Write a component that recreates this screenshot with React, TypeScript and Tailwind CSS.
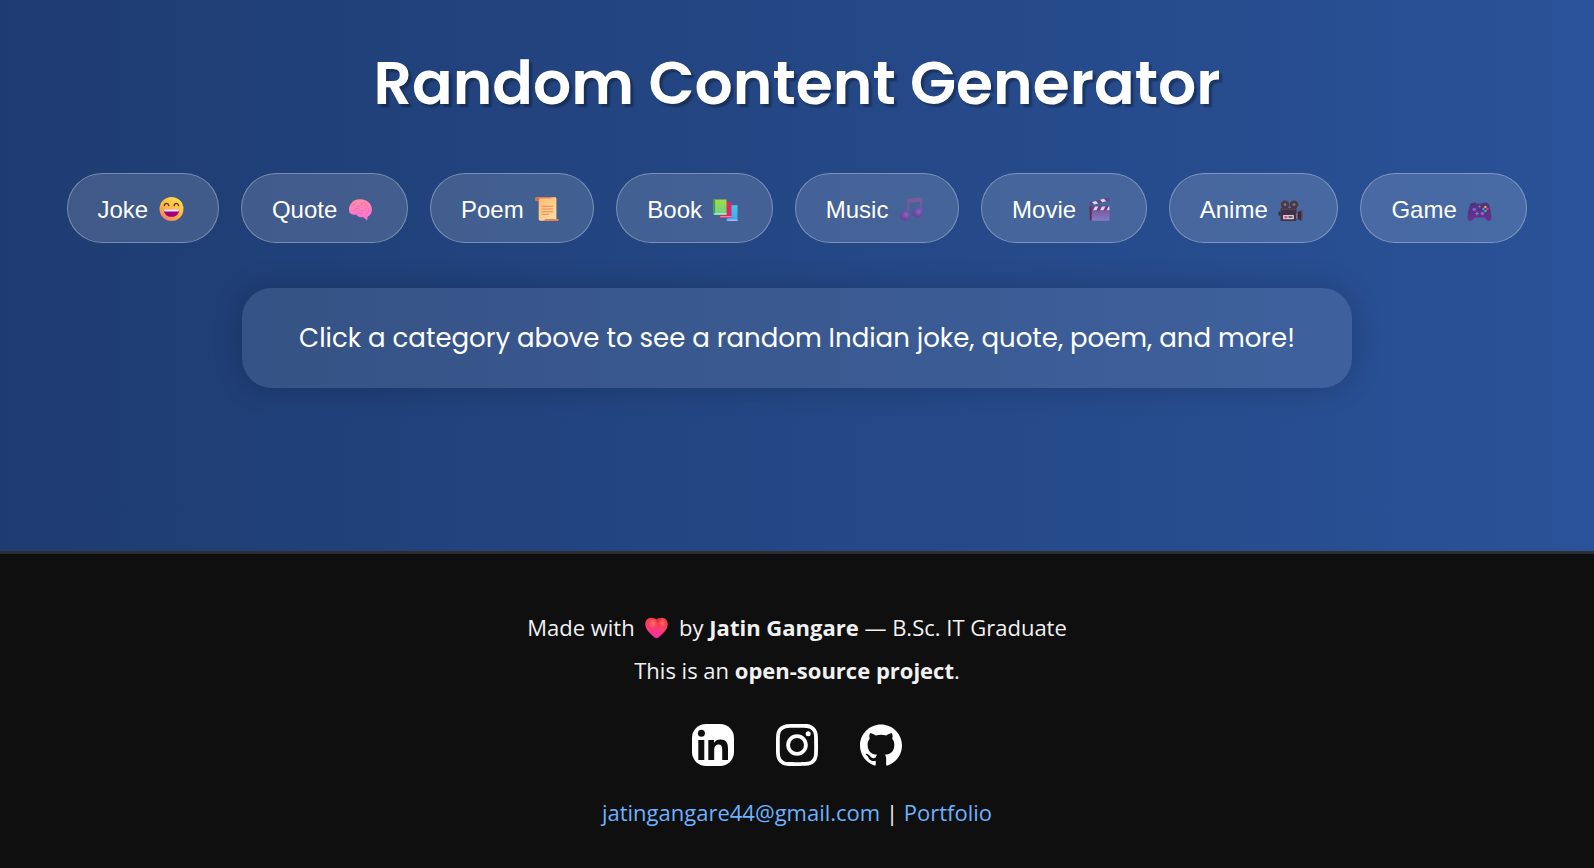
import type { ReactNode } from "react";
import { SiGithub, SiInstagram } from "react-icons/si";

function Glyph({ children }: { children: ReactNode }) {
  return (
    <svg aria-hidden="true" viewBox="0 0 32 24" className="inline-block h-6 w-[33px] align-[-3px]">
      {children}
    </svg>
  );
}

const Laugh = () => (
  <Glyph>
    <defs>
      <linearGradient id="face" x1="0.8" y1="0" x2="0.2" y2="1">
        <stop offset="0" stopColor="#ffe04a" />
        <stop offset="0.6" stopColor="#ffb33a" />
        <stop offset="1" stopColor="#f4786a" />
      </linearGradient>
    </defs>
    <circle cx="16" cy="12" r="12" fill="url(#face)" />
    <path d="M8.8 8.6c.5-3 4-3 4.6 0M18.6 8.6c.5-3 4-3 4.6 0" fill="none" stroke="#5a3030" strokeWidth="1.3" strokeLinecap="round" />
    <path d="M8.3 12.4h15.4c0 4.6-3.3 7.4-7.7 7.4s-7.7-2.8-7.7-7.4z" fill="#a3007f" />
    <path d="M8.6 12.2h14.8v1.2c0 .8-.6 1.2-1.2 1.2H9.8c-.7 0-1.2-.4-1.2-1.2z" fill="#f3e6f5" />
  </Glyph>
);

const Brain = () => (
  <Glyph>
    <defs>
      <linearGradient id="brain" x1="0" y1="0" x2="0" y2="1">
        <stop offset="0" stopColor="#ff8fa3" />
        <stop offset="1" stopColor="#ff6ee0" />
      </linearGradient>
    </defs>
    <path d="M5 15.6c-1-3-.6-6.800 1.600-9C8.500 3.300 12.500 1.900 16.500 2.300c5.500.2 9.500 3.500 10.600 8 .9 4-.6 8-4 9.500l-.5 3.800-4-3.600c-3 .6-5.500-.2-6.800-2.600-2.600.6-5.200.3-6.800-1.800z" fill="url(#brain)" />
    <path d="M7.500 8c2-.2 3.300-1.200 4-2.600M13 9.500c2.500 0 4.500-1.500 5-4M20 4.800c-.3 2.200 1 3.600 3.200 4M9 13.500c1.300-2 3-2.500 5.500-1.800M16.500 13.500c2.500 1 5-.2 5.700-2.600M24 12c.6 2.300-.5 4-2.600 4.800M12.500 16.500c2.500-.8 4.500-.5 6 1" fill="none" stroke="#e268a6" strokeWidth="0.7" strokeLinecap="round" />
  </Glyph>
);

const Scroll = () => (
  <Glyph>
    <defs>
      <linearGradient id="paper" x1="0" y1="0" x2="1" y2="1">
        <stop offset="0" stopColor="#ffb56b" />
        <stop offset="1" stopColor="#ffe0a8" />
      </linearGradient>
    </defs>
    <path d="M6.500 0.300h18c.9 0 1.400.6 1.400 1.400v22H9.800c-1 0-1.600-.7-1.600-1.600V3.500H5.300c-1.200 0-1.200-3.200 1.200-3.200z" fill="url(#paper)" />
    <path d="M6.500.3H21v.9H8.800v2.400H5.600C4 3.600 4.200.3 6.500.3z" fill="#d6713f" />
    <path d="M15 21.900h13c.4 1.300-.3 2.100-1.800 2.100H10.500c2 0 3.800-.5 4.500-2.100z" fill="#e88352" />
    <path d="M11 9.200h11.600M11 12h11.600M11 14.800h11.600M11 17.300h7.500" stroke="#e58a55" strokeWidth="1.1" />
  </Glyph>
);

const Books = () => (
  <Glyph>
    <defs>
      <linearGradient id="green" x1="0" y1="0" x2="0" y2="1">
        <stop offset="0" stopColor="#a6db45" />
        <stop offset="1" stopColor="#63d58b" />
      </linearGradient>
      <linearGradient id="blue" x1="0" y1="0" x2="0" y2="1">
        <stop offset="0" stopColor="#48c9f2" />
        <stop offset="1" stopColor="#3aa4f0" />
      </linearGradient>
    </defs>
    <path d="M17 8.200h11V24H18c-1.500 0-1.500-2.500 0-2.500z" fill="url(#blue)" />
    <path d="M17.500 22.500H28V24H18z" fill="#a9b9f0" />
    <path d="M10 5h12v16H11c-1.600 0-1.600-2.300 0-2.300z" fill="#dc2864" />
    <path d="M10.500 19.300H22v.9H11z" fill="#e6a3cf" />
    <path d="M4 2.500h13v15.400H5c-.6 0-1-.4-1-1z" fill="url(#green)" />
    <path d="M4 2.500h1.600v13.400L4 17z" fill="#3f9a4b" />
    <path d="M5 16.300h12v1H5z" fill="#d2e7df" />
  </Glyph>
);

const Music = () => (
  <Glyph>
    <defs>
      <linearGradient id="note" x1="0" y1="0" x2="0" y2="1">
        <stop offset="0" stopColor="#7c5c9d" />
        <stop offset="1" stopColor="#744fa0" />
      </linearGradient>
      <radialGradient id="head" cx="0.65" cy="0.35">
        <stop offset="0" stopColor="#8a66c4" />
        <stop offset="1" stopColor="#68469b" />
      </radialGradient>
    </defs>
    <path d="M11.500 3.200c0-.8.500-1.300 1.300-1.400L26 .5c.4 0 .6.200.6.600V16h-2.200V4.800L13.700 6V19h-2.200z" fill="url(#note)" />
    <circle cx="9.200" cy="19" r="4.900" fill="url(#head)" />
    <circle cx="21.800" cy="16.200" r="4.900" fill="url(#head)" />
  </Glyph>
);

const Clapper = () => (
  <Glyph>
    <defs>
      <linearGradient id="slate" x1="0" y1="0" x2="0" y2="1">
        <stop offset="0" stopColor="#70508a" />
        <stop offset="1" stopColor="#8879c9" />
      </linearGradient>
    </defs>
    <path d="M6 5.500 24.500.7c.5-.1.800.1.900.5l.6 2.300L7 8.300z" fill="#66427f" />
    <path d="m8.500 5 4-1.100 2.200 2.500-4 1zM16.500 2.800l4-1.100L22.700 4.300l-4 1z" fill="#d9d5fb" />
    <path d="M6 9.200h20V22.500c0 .8-.5 1.300-1.300 1.300H7.300c-.8 0-1.300-.5-1.300-1.300z" fill="url(#slate)" />
    <path d="M6 9.200h2.200v14.600H7.300c-.8 0-1.300-.5-1.300-1.300z" fill="#583354" />
    <path d="M8.200 9.200H26v4.300H8.200z" fill="#6a427c" />
    <path d="M11.500 9.500h3.400l-2 3.700H9.500zM18.500 9.500h3.400l-2 3.700h-3.400zM25 9.500h1v3l-.4.700h-2.500z" fill="#d9d5fb" />
  </Glyph>
);

const Camera = () => (
  <Glyph>
    <path d="M4 14.500h2v4H4zM22 15.800 28 13v11l-6-2.200z" fill="#392c42" />
    <path d="M27 13.500 28 13v11l-1-.4z" fill="#6b6279" />
    <circle cx="10.500" cy="7.600" r="4.200" fill="#493841" />
    <circle cx="19.500" cy="7.600" r="4.200" fill="#493841" />
    <circle cx="10.500" cy="7.600" r="1.500" fill="#807180" />
    <circle cx="19.500" cy="7.600" r="1.500" fill="#807180" />
    <rect x="6" y="11" width="16" height="13" rx="1.200" fill="#403145" />
    <path d="M7 11.500h14v1.300H7z" fill="#59475c" />
    <rect x="8.600" y="18" width="10.800" height="4.300" rx=".5" fill="#d8ccdc" />
    <path d="M10 19h2.800v2.300H10z" fill="#e64683" />
    <path d="M14 19.200h4v1.600h-4z" fill="#5c4b62" />
    <path d="M22 15.800h.9v6.300l-.9-.3z" fill="#a79fba" />
  </Glyph>
);

const Gamepad = () => (
  <Glyph>
    <defs>
      <linearGradient id="pad" x1="0" y1="0" x2="0" y2="1">
        <stop offset="0" stopColor="#4d347c" />
        <stop offset="1" stopColor="#67308f" />
      </linearGradient>
    </defs>
    <path d="M9 5.800h3.300l1.300 1h4.800l1.300-1H23c1.200 0 2 .7 2.400 1.800 1.500 4 2.500 9 2.500 13 0 1.800-.8 3.300-2.300 3.300-2.600 0-3.300-3-5.500-3.500H12c-2.300.5-3 3.500-5.600 3.500-1.500 0-2.300-1.500-2.300-3.300 0-4 1-9 2.500-13C7 6.500 7.800 5.800 9 5.800z" fill="url(#pad)" />
    <circle cx="10.800" cy="12.500" r="1.800" fill="#8364c8" />
    <circle cx="18.900" cy="16.500" r="1.800" fill="#8364c8" />
    <path d="M13.500 14.600v3.800M11.600 16.500h3.800" stroke="#8b6fd4" strokeWidth="1.200" />
    <circle cx="16" cy="9.600" r="1" fill="#a47f8f" />
    <circle cx="21.900" cy="9.900" r="1.200" fill="#e6b83a" />
    <circle cx="19.900" cy="12" r="1.200" fill="#409be8" />
    <circle cx="23.900" cy="12" r="1.200" fill="#ef3b5d" />
    <circle cx="21.900" cy="14" r="1.200" fill="#33c281" />
  </Glyph>
);

const Heart = () => (
  <Glyph>
    <defs>
      <linearGradient id="heart" x1="0.6" y1="0" x2="0.4" y2="1">
        <stop offset="0" stopColor="#f0403f" />
        <stop offset="0.5" stopColor="#fc3b6c" />
        <stop offset="1" stopColor="#f52cb0" />
      </linearGradient>
      <radialGradient id="shine">
        <stop offset="0" stopColor="#ff7060" />
        <stop offset="1" stopColor="#ff7060" stopOpacity="0" />
      </radialGradient>
    </defs>
    <path d="M16 23.200c-1 0-2.500-1.200-4.500-3C7.500 16.800 4.800 13.400 4.800 9.100 4.800 5.600 7.200 2.800 10.500 2.800c2.300 0 4.300.8 5.500 1.800 1.200-1 3.200-1.800 5.500-1.800 3.300 0 5.700 2.800 5.700 6.300 0 4.300-2.700 7.700-6.700 11.100-2 1.800-3.500 3-4.500 3z" fill="url(#heart)" />
    <circle cx="12.500" cy="8.500" r="4.500" fill="url(#shine)" />
    <ellipse cx="22" cy="8" rx="3" ry="4.500" fill="url(#shine)" />
    <path d="M16 4.600c1.200-1 3.200-1.800 5.500-1.800-2.500 1.300-4 4-5 7z" fill="#d0203c" opacity="0.500" />
  </Glyph>
);

const LinkedIn = () => (
  <svg aria-hidden="true" viewBox="0 0 42 42" className="size-[42px]">
    <rect width="42" height="42" rx="14" fill="#fff" />
    <g fill="#0f0f0f">
      <circle cx="9.400" cy="9.300" r="3.500" />
      <path d="M6.300 16h6v20h-6zM16.300 16H22v2.800c1.200-2.100 3.500-3.300 6.300-3.300 5.600 0 7.700 3.200 7.700 9V36h-5.800V25.500c0-3-.9-4.900-3.600-4.900-2.900 0-4.400 2-4.400 5V36h-5.900z" />
    </g>
  </svg>
);

const categories = [
  { name: "Joke", Icon: Laugh },
  { name: "Quote", Icon: Brain },
  { name: "Poem", Icon: Scroll },
  { name: "Book", Icon: Books },
  { name: "Music", Icon: Music },
  { name: "Movie", Icon: Clapper },
  { name: "Anime", Icon: Camera },
  { name: "Game", Icon: Gamepad },
];

export default function App() {
  return (
    <div className="flex min-h-screen flex-col bg-linear-to-r from-[#1e3c72] to-[#2a5298] text-center text-white">
      <main className="px-8 pt-[38px] pb-[163px] font-['Poppins','Inter',sans-serif]">
        <h1 className="text-[60px] leading-[90px] font-semibold [text-shadow:3px_3px_2px_rgba(0,0,0,0.3)]">
          Random Content Generator
        </h1>
        <div className="mt-[45px] flex flex-wrap justify-center gap-[22px]">
          {categories.map(({ name, Icon }) => (
            <button
              key={name}
              type="button"
              className="h-[70px] cursor-pointer rounded-full border border-white/30 bg-white/15 px-[30px] pt-1 font-['Liberation_Sans',Arial,sans-serif] text-2xl whitespace-nowrap"
            >
              {name} <Icon />
            </button>
          ))}
        </div>
        <p className="mx-auto mt-[45px] flex min-h-[100px] max-w-[1110px] items-center justify-center rounded-[30px] bg-white/10 px-8 text-[26px] leading-10 shadow-[0_0_30px_rgba(0,0,0,0.2)]">
          Click a category above to see a random Indian joke, quote, poem, and more!
        </p>
      </main>
      <footer className="grow border-t-3 border-[#2e2e2e] bg-[#0f0f0f] px-8 pt-[52px] pb-8 font-['Open_Sans',sans-serif] text-[22px] leading-[43px] text-[#f1f1f1]">
        <p>
          Made with <Heart /> by <strong className="font-bold">Jatin Gangare</strong> — B.Sc. IT Graduate
        </p>
        <p>
          This is an <strong className="font-bold">open-source project</strong>.
        </p>
        <nav aria-label="Social links" className="mt-8 flex justify-center gap-[42px] text-white">
          <a href="#linkedin" aria-label="LinkedIn">
            <LinkedIn />
          </a>
          <a href="#instagram" aria-label="Instagram">
            <SiInstagram className="size-[42px]" />
          </a>
          <a href="#github" aria-label="GitHub">
            <SiGithub className="size-[42px]" />
          </a>
        </nav>
        <p className="mt-[25px]">
          <a href="mailto:jatingangare44@gmail.com" className="text-[#6cb2ff]">
            jatingangare44@gmail.com
          </a>{" "}
          |{" "}
          <a href="#portfolio" className="text-[#6cb2ff]">
            Portfolio
          </a>
        </p>
      </footer>
    </div>
  );
}
